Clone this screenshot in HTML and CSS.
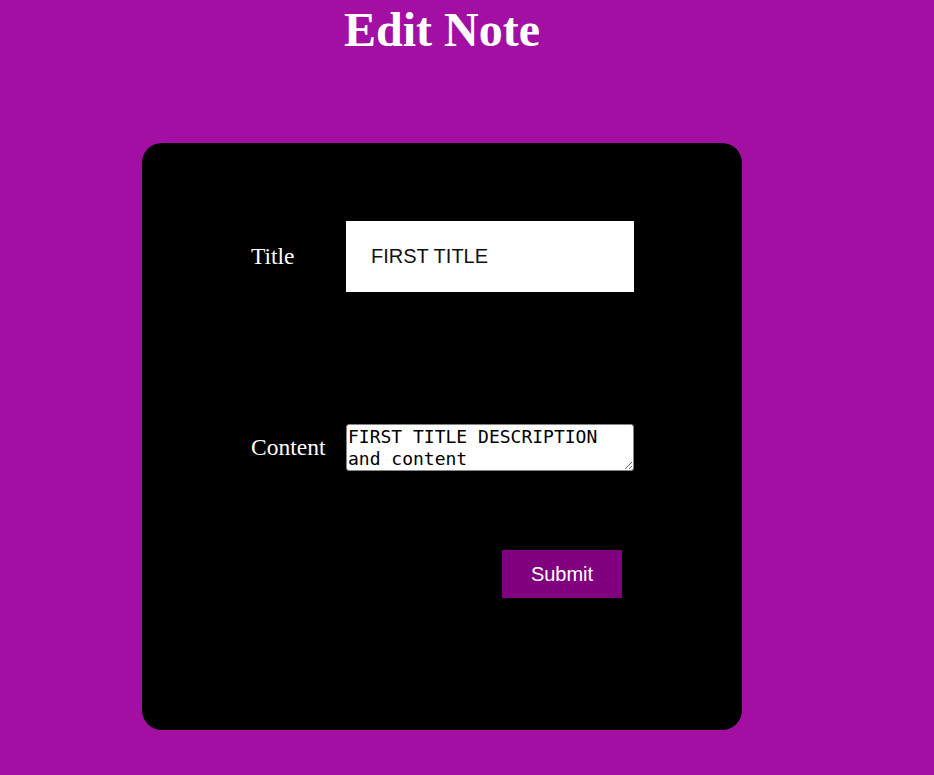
FILE: index.html
```html
<!DOCTYPE html>
<html>
<head>
<meta charset="utf-8">
<title>Edit Note</title>
<link rel="stylesheet" href="styles.css">
</head>
<body>
<div class="page">
  <h1 class="heading">Edit Note</h1>
  <form class="card">
    <div class="row row-title">
      <label class="label" for="title">Title</label>
      <input class="text-input" id="title" type="text" value="FIRST TITLE">
    </div>
    <div class="row row-content">
      <label class="label" for="content">Content</label>
      <textarea class="text-area" id="content" rows="2">FIRST TITLE DESCRIPTION and content</textarea>
    </div>
    <div class="actions">
      <button class="submit" type="button">Submit</button>
    </div>
  </form>
</div>
</body>
</html>
```
FILE: styles.css
```css
html, body {
  margin: 0;
  padding: 0;
}
body {
  background: #a30ea3;
  font-family: "Liberation Serif", "Times New Roman", serif;
  padding: 0 8px;
  min-height: 775px;
  box-sizing: border-box;
}
.page {
  width: 868px;
  display: flex;
  flex-direction: column;
  align-items: center;
}
.heading {
  margin: 0;
  padding-top: 2px;
  font-size: 48px;
  line-height: 55px;
  font-weight: bold;
  color: #fff;
}
.card {
  margin-top: 86px;
  width: 600px;
  height: 587px;
  box-sizing: border-box;
  background: #000;
  border-radius: 20px;
  padding: 78px 0 0 109px;
  display: flex;
  flex-direction: column;
}
.row {
  display: flex;
  align-items: center;
}
.row-content {
  margin-top: 132px;
}
.label {
  width: 95px;
  color: #fff;
  font-size: 23.5px;
}
.text-input {
  width: 288px;
  height: 71px;
  box-sizing: border-box;
  border: none;
  outline: none;
  background: #fff;
  padding: 0 25px;
  font-family: "Liberation Sans", Arial, sans-serif;
  font-size: 20px;
  color: #111;
}
.text-area {
  width: 288px;
  height: 47px;
  box-sizing: border-box;
  border: 1px solid #858585;
  border-radius: 3px;
  background: #fff;
  padding: 1px 1px;
  margin: 0;
  font-family: "DejaVu Sans Mono", "Liberation Mono", monospace;
  font-size: 18px;
  line-height: 22px;
  color: #000;
  overflow: hidden;
}
.actions {
  margin-top: 79px;
  padding-left: 251px;
}
.submit {
  width: 120px;
  height: 48px;
  border: none;
  background: #800080;
  color: #fff;
  font-family: "Liberation Sans", Arial, sans-serif;
  font-size: 20px;
  padding: 0;
}
```
